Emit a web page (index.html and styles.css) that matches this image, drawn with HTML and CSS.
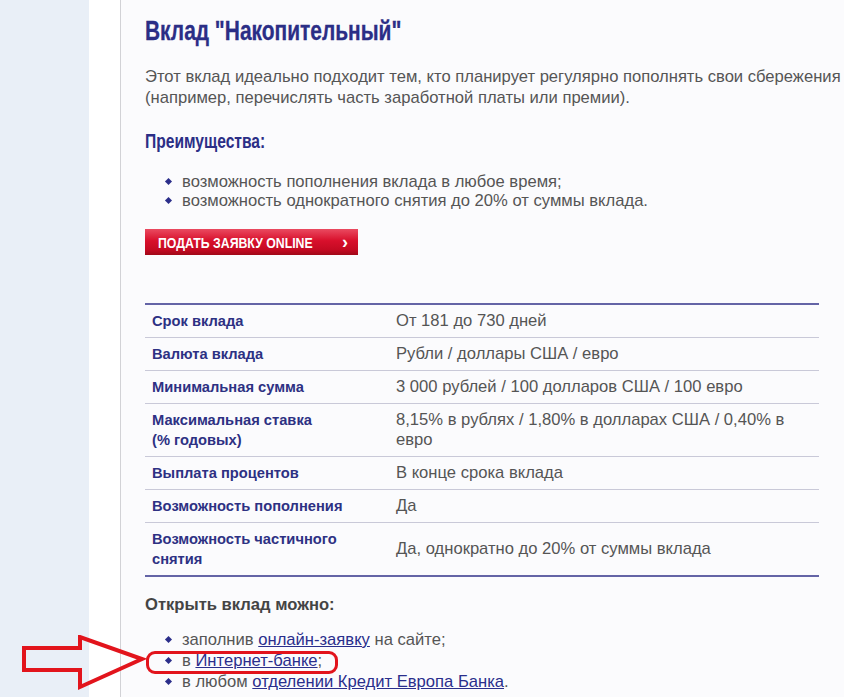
FILE: index.html
```html
<!DOCTYPE html>
<html>
<head>
  <meta charset="utf-8">
  <title>Вклад "Накопительный"</title>
  <link rel="stylesheet" href="styles.css">
</head>
<body>
  <div class="sidebar"></div>
  <div class="gutter"></div>

  <div class="content">
    <h1><span class="narrow">Вклад "Накопительный"</span></h1>

    <p class="intro">
      Этот вклад идеально подходит тем, кто планирует регулярно пополнять свои сбережения<br>
      (например, перечислять часть заработной платы или премии).
    </p>

    <h2><span class="narrow">Преимущества:</span></h2>
    <ul class="bullets">
      <li>возможность пополнения вклада в любое время;</li>
      <li>возможность однократного снятия до 20% от суммы вклада.</li>
    </ul>

    <a class="apply" href="#"><span class="narrow">ПОДАТЬ ЗАЯВКУ ONLINE</span><span class="chevron">›</span></a>

    <table class="terms">
      <tr><th>Срок вклада</th><td>От 181 до 730 дней</td></tr>
      <tr><th>Валюта вклада</th><td>Рубли / доллары США / евро</td></tr>
      <tr><th>Минимальная сумма</th><td>3 000 рублей / 100 долларов США / 100 евро</td></tr>
      <tr><th>Максимальная ставка<br>(% годовых)</th><td>8,15% в рублях / 1,80% в долларах США / 0,40% в евро</td></tr>
      <tr><th>Выплата процентов</th><td>В конце срока вклада</td></tr>
      <tr><th>Возможность пополнения</th><td>Да</td></tr>
      <tr><th>Возможность частичного<br>снятия</th><td>Да, однократно до 20% от суммы вклада</td></tr>
    </table>

    <h4>Открыть вклад можно:</h4>
    <ul class="bullets open-list">
      <li>заполнив <a href="#">онлайн-заявку</a> на сайте;</li>
      <li class="marked">в <a href="#">Интернет-банке</a>;</li>
      <li>в любом <a href="#">отделении Кредит Европа Банка</a>.</li>
    </ul>
  </div>

  <svg class="arrow" xmlns="http://www.w3.org/2000/svg" viewBox="0 0 130 56" width="130" height="56">
    <polygon points="3,13 59,13 59,2 121,24 59,52 59,35 3,35" fill="none" stroke="#e2141c" stroke-width="4" stroke-linejoin="miter"></polygon>
  </svg>
</body>
</html>
```

FILE: styles.css
```css
html, body {
  margin: 0;
  height: 100%;
  overflow: hidden;
}

body {
  display: flex;
  font-family: "Liberation Sans", Arial, sans-serif;
  font-size: 16.6px;
  color: #555555;
  background: #fbfbfd;
  position: relative;
}

.sidebar {
  width: 89px;
  flex: none;
  background: #e9eff7;
}

.gutter {
  width: 31px;
  flex: none;
  background: #ffffff;
  border-right: 1px solid #d2d2d6;
}

.content {
  flex: none;
  width: 760px;
  padding-left: 24px;
}

/* Arial Narrow look-alike */
.narrow {
  display: inline-block;
  white-space: nowrap;
  transform: scaleX(0.82);
  transform-origin: 0 0;
}

h1 {
  margin: 16px 0 0;
  font-size: 27px;
  line-height: 30px;
  font-weight: bold;
  color: #2b2e86;
  -webkit-text-stroke: 0.3px #2b2e86;
}

h1 .narrow {
  transform: scaleX(0.775);
}

.intro {
  margin: 20px 0 0;
  line-height: 21px;
  white-space: nowrap;
}

h2 {
  margin: 21px 0 0;
  font-size: 20px;
  line-height: 24px;
  font-weight: bold;
  color: #2b2e86;
}

h2 .narrow {
  transform: scaleX(0.78);
}

.bullets {
  list-style: none;
  margin: 19px 0 0;
  padding: 0 0 0 37px;
  line-height: 19px;
}

.bullets li {
  position: relative;
}

.bullets li:before {
  content: "";
  position: absolute;
  left: -16px;
  top: 7px;
  width: 5px;
  height: 5px;
  background: #2b2e8a;
  transform: rotate(45deg);
}

.apply {
  display: flex;
  align-items: center;
  width: 213px;
  height: 26px;
  box-sizing: border-box;
  margin-top: 19px;
  padding-left: 13px;
  background: linear-gradient(#ea4a60 0%, #d8102c 45%, #c40a22 80%, #a00818 100%);
  color: #ffffff;
  text-decoration: none;
  font-weight: bold;
  font-size: 15px;
}

.apply .narrow {
  width: 160px;
}

.apply .chevron {
  margin-left: 24px;
  font-size: 18px;
  line-height: 1;
}

.terms {
  margin-top: 48px;
  width: 674px;
  border-collapse: collapse;
  border-top: 2px solid #6464a6;
  border-bottom: 2px solid #6464a6;
}

.terms th,
.terms td {
  padding: 6px 7px;
  line-height: 20px;
  text-align: left;
  vertical-align: middle;
  border-bottom: 1px solid #c9c9d8;
}

.terms th {
  width: 230px;
  font-size: 14.7px;
  font-weight: bold;
  color: #2d3183;
}

.terms td {
  color: #555555;
}

h4 {
  margin: 18px 0 0;
  font-size: 16.6px;
  line-height: 20px;
  font-weight: bold;
  color: #444444;
}

.open-list {
  margin-top: 14px;
  line-height: 21px;
}

.open-list li:before {
  top: 8px;
}

.open-list a {
  color: #2a2e8c;
}

.marked:after {
  content: "";
  position: absolute;
  left: -36px;
  top: 1px;
  width: 186px;
  height: 17px;
  border: 3px solid #e2141c;
  border-radius: 9px;
}

.arrow {
  position: absolute;
  left: 21px;
  top: 635px;
}
```
